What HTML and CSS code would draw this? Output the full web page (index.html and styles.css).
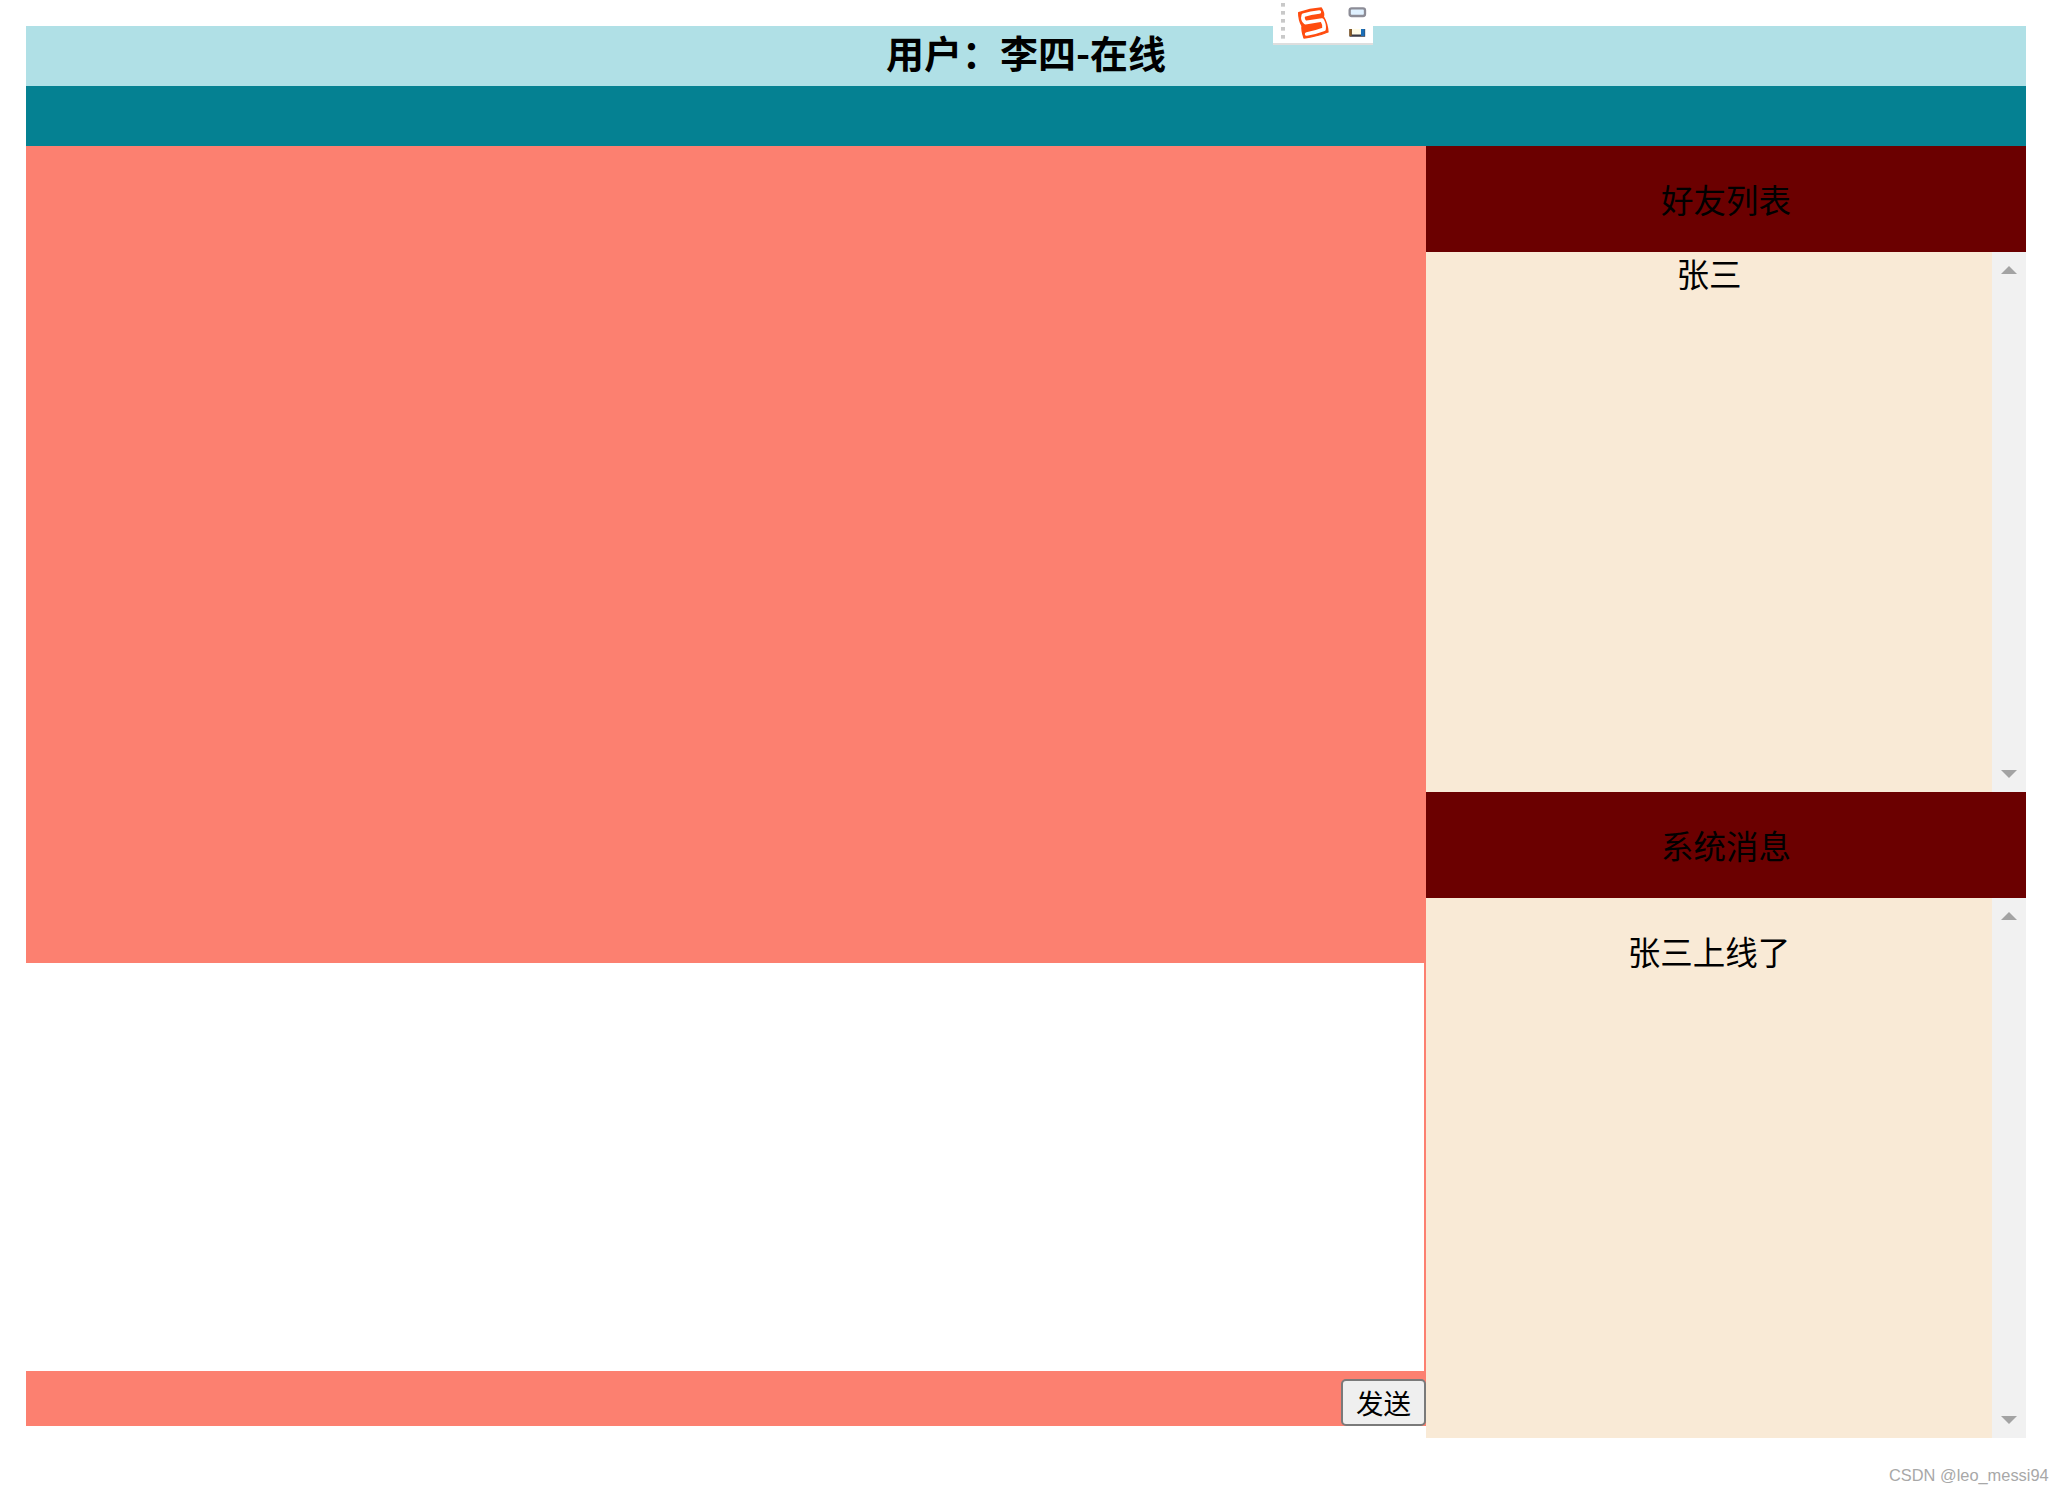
FILE: index.html
```html
<!DOCTYPE html>
<html lang="zh-CN">
<head>
<meta charset="utf-8">
<title>聊天室</title>
<link rel="stylesheet" href="styles.css">
</head>
<body>
<div class="app">
  <header class="title">用户：李四-在线</header>
  <nav class="nav"></nav>
  <main class="main">
    <section class="chat">
      <div class="messages"></div>
      <textarea class="input"></textarea>
      <div class="toolbar"><button class="send">发送</button></div>
    </section>
    <aside class="side">
      <h3 class="side-head">好友列表</h3>
      <div class="panel">
        <div class="panel-body"><div class="friend">张三</div></div>
        <div class="scrollbar"><span class="arrow-up"></span><span class="arrow-down"></span></div>
      </div>
      <h3 class="side-head">系统消息</h3>
      <div class="panel">
        <div class="panel-body"><p class="notice">张三上线了</p></div>
        <div class="scrollbar"><span class="arrow-up"></span><span class="arrow-down"></span></div>
      </div>
    </aside>
  </main>
</div>
<div class="ime">
  <svg class="ime-icon" viewBox="99 0 300 135" width="100" height="45" aria-hidden="true">
    <g fill="#c9c9c9">
      <rect x="123" y="9" width="12" height="11"/>
      <rect x="123" y="33" width="12" height="11"/>
      <rect x="123" y="57" width="12" height="11"/>
      <rect x="123" y="81" width="12" height="11"/>
      <rect x="123" y="105" width="12" height="11"/>
    </g>
    <path d="M176 38 Q210 26 244 24 Q254 40 250 50 Q262 70 264 96 Q230 110 192 114 Q184 90 186 78 Q176 60 176 38 Z" fill="#ff4c0f" stroke="#ff4c0f" stroke-width="4" stroke-linejoin="round"/>
    <path d="M238 36 Q212 38 190 46 Q186 60 196 68 L246 60 Q254 72 252 88 Q226 98 200 102" fill="none" stroke="#fff" stroke-width="11" stroke-linejoin="round" stroke-linecap="round"/>
    <rect x="329" y="25" width="46" height="23" rx="6" fill="#dff1ff" stroke="#8c8c96" stroke-width="7"/>
    <path d="M332 87 V107 H372 V87" fill="#fffbe6" stroke="#3a3a44" stroke-width="7"/>
    <rect x="363" y="87" width="11" height="21" fill="#1c6fb8"/>
    <rect x="328" y="87" width="7" height="21" fill="#8a5a22"/>
  </svg>
</div>
<div class="watermark">CSDN @leo_messi94</div>
</body>
</html>
```
FILE: styles.css
```css
* {
  box-sizing: border-box;
}

html,
body {
  height: 100%;
}

body {
  margin: 0;
  padding: 26px 0 0 26px;
  background: #fff;
  color: #000;
  font-family: "Noto Sans CJK SC", "Liberation Sans", sans-serif;
  overflow: hidden;
  position: relative;
}

.app {
  width: 2000px;
}

.title {
  height: 60px;
  background: #b0e0e6;
  font-size: 38px;
  font-weight: 700;
  line-height: 52px;
  text-align: center;
}

.nav {
  height: 60px;
  background: #058192;
}

.main {
  display: flex;
  align-items: flex-start;
}

.chat {
  width: 1400px;
  display: flex;
  flex-direction: column;
}

.messages {
  height: 817px;
  background: #fc8070;
}

.input {
  display: block;
  width: 100%;
  height: 408px;
  margin: 0;
  padding: 0;
  border: 0;
  border-right: 2px solid #fc8070;
  border-radius: 0;
  outline: 0;
  resize: none;
  background: #fff;
}

.toolbar {
  height: 55px;
  display: flex;
  justify-content: flex-end;
  align-items: flex-end;
  background: #fc8070;
}

.send {
  width: 85px;
  height: 47px;
  padding: 0;
  border: 2px solid #7a7a7a;
  border-radius: 5px;
  background: #efefef;
  color: #000;
  font-family: inherit;
  font-size: 27.5px;
  line-height: 1;
}

.side {
  width: 600px;
}

.side-head {
  height: 106px;
  margin: 0;
  background: #6b0000;
  font-size: 32.5px;
  font-weight: 400;
  line-height: 105px;
  text-align: center;
}

.panel {
  height: 540px;
  display: flex;
  background: #f9ead6;
}

.panel-body {
  flex: 1;
  min-width: 0;
  font-size: 32.5px;
  line-height: 41px;
  text-align: center;
}

.notice {
  margin: 32px 0;
}

.scrollbar {
  width: 34px;
  padding: 14px 0;
  display: flex;
  flex-direction: column;
  justify-content: space-between;
  align-items: center;
  background: #f1f1f1;
}

.arrow-up,
.arrow-down {
  width: 0;
  height: 0;
  border-left: 8px solid transparent;
  border-right: 8px solid transparent;
}

.arrow-up {
  border-bottom: 8px solid #a3a3a3;
}

.arrow-down {
  border-top: 8px solid #a3a3a3;
}

.ime {
  position: absolute;
  left: 1273px;
  top: 0;
  width: 100px;
  height: 45px;
  background: #fff;
  border-bottom: 2px solid #dedede;
}

.ime-icon {
  display: block;
}

.watermark {
  position: absolute;
  left: 1889px;
  top: 1465px;
  color: #a8a8a8;
  font-family: "Liberation Sans", sans-serif;
  font-size: 16.4px;
  line-height: 20px;
  white-space: nowrap;
}
```
